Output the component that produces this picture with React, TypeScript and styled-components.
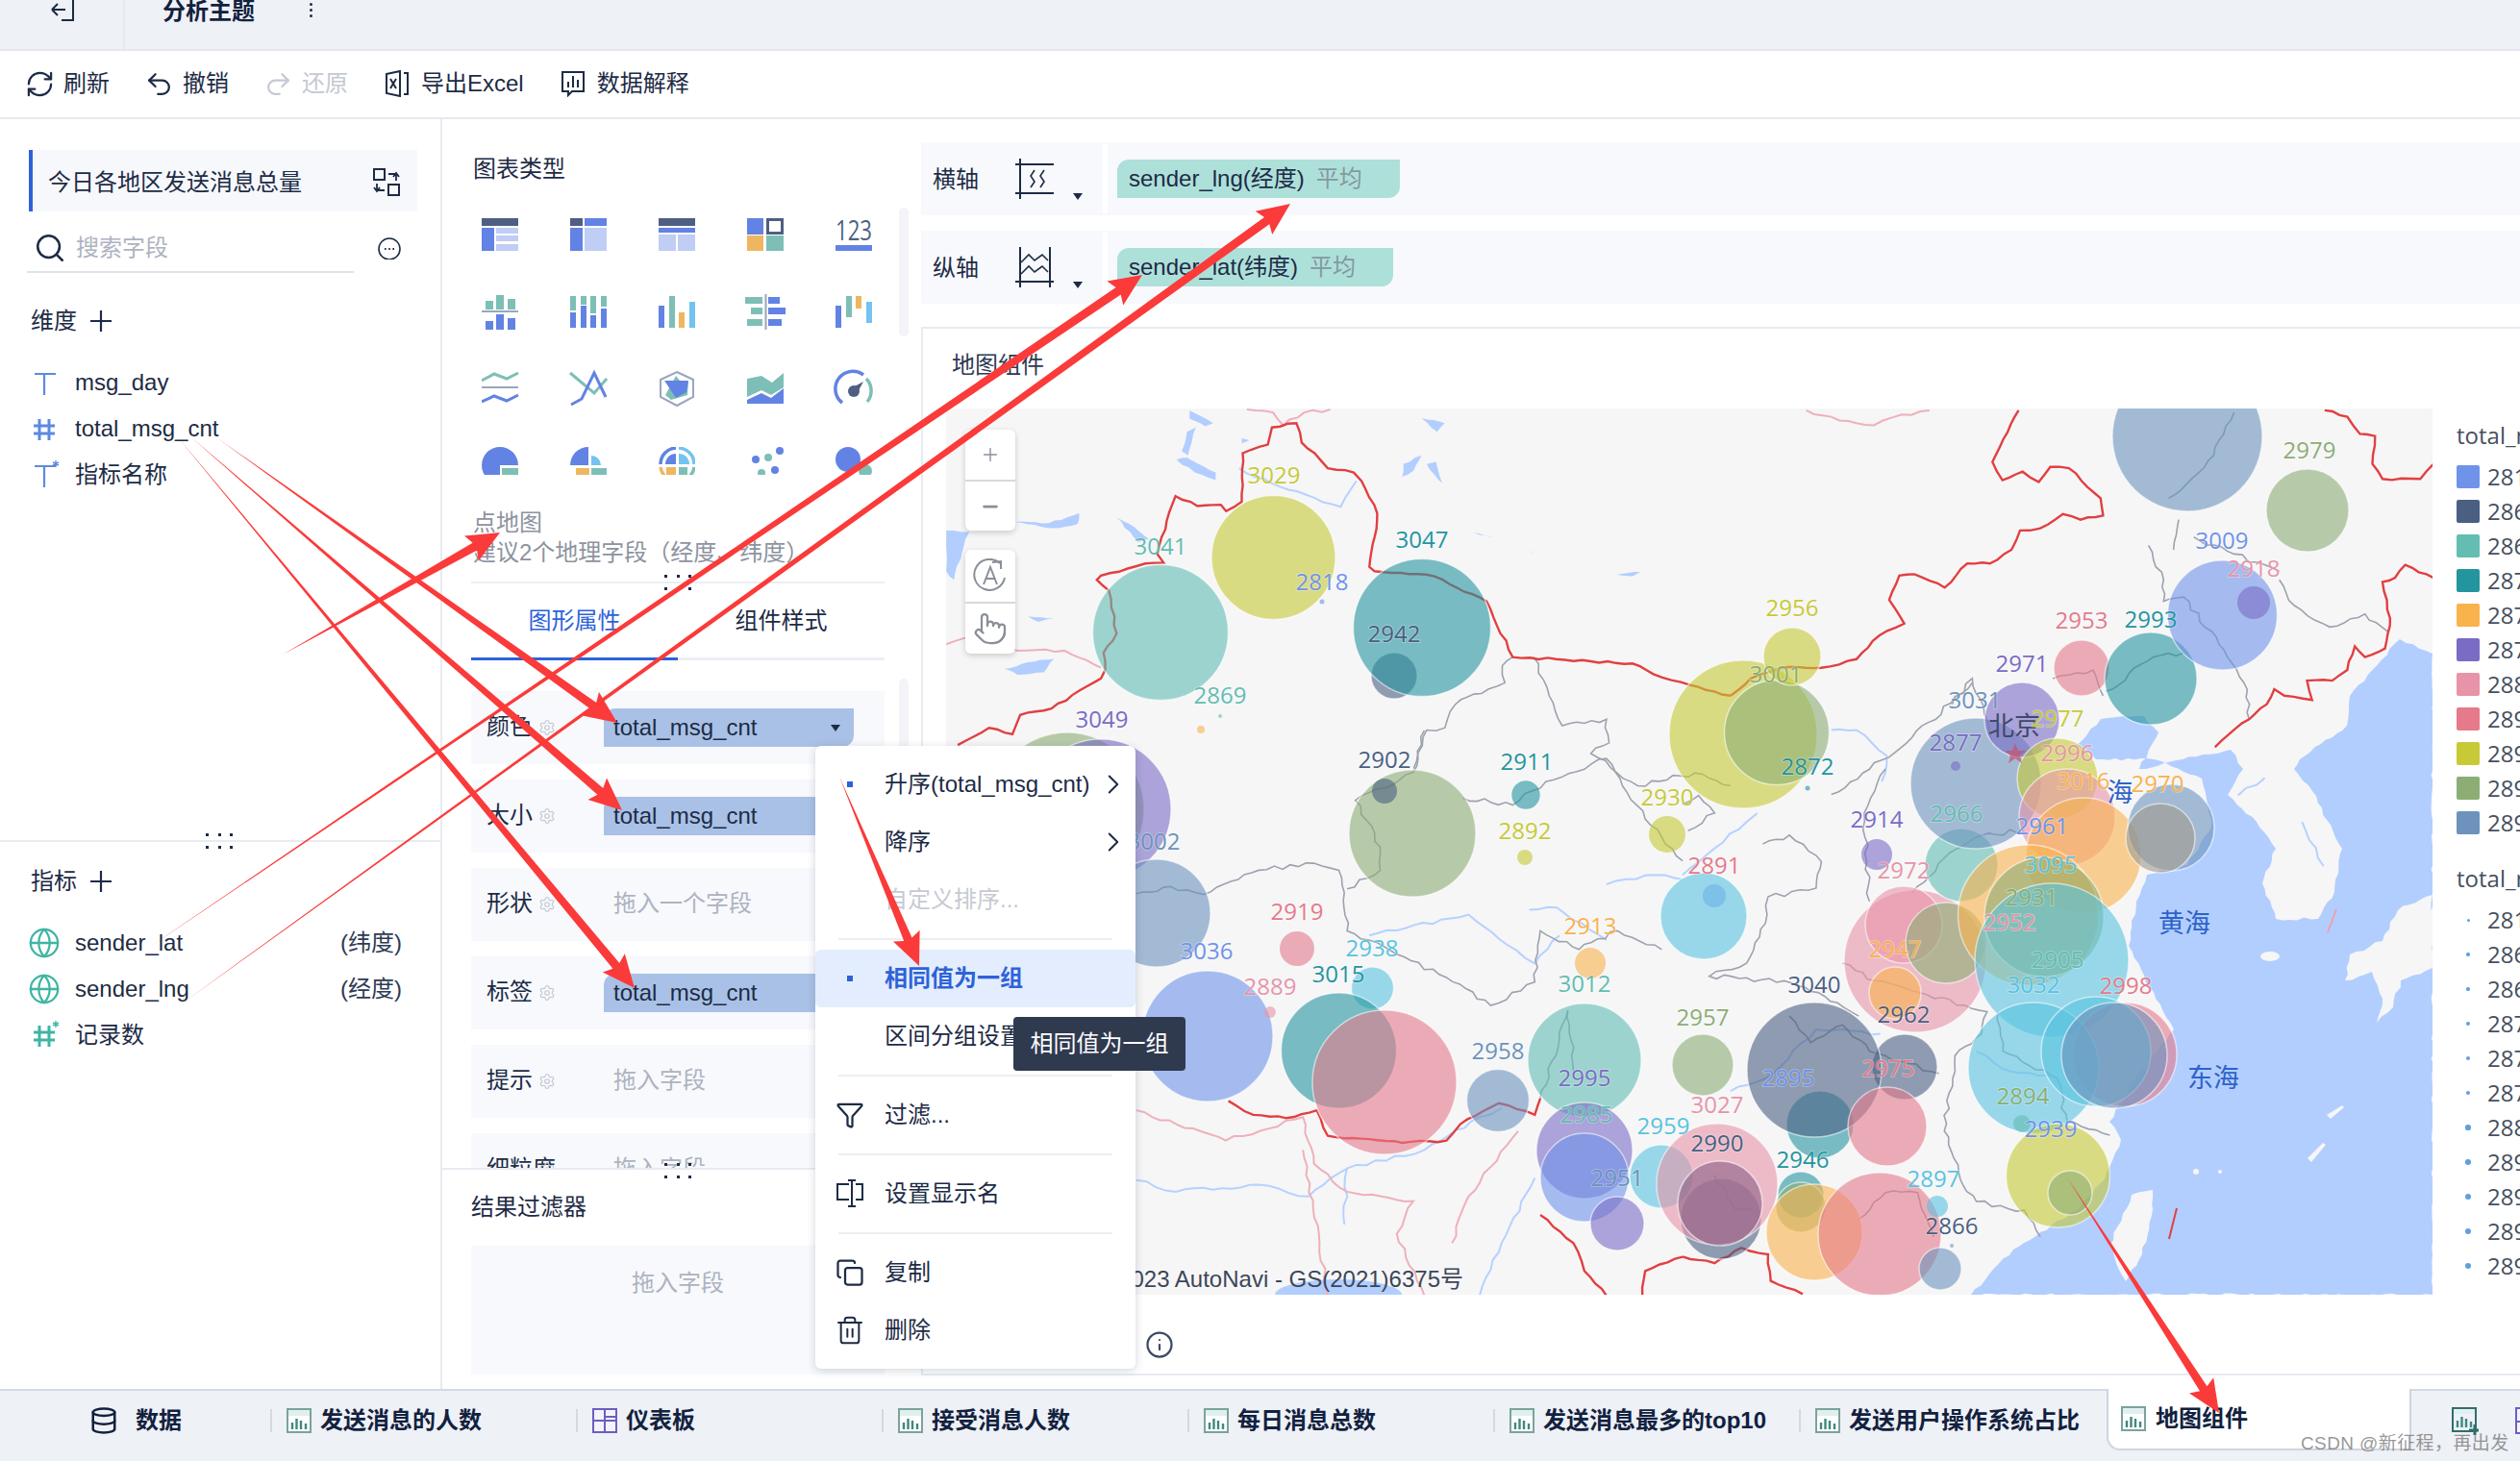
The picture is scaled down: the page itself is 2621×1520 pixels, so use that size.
import React from 'react';
import styled, { createGlobalStyle } from 'styled-components';
import { RefreshCw, Undo2, Redo2, Search, Globe, Settings, ChevronRight, Info, Filter, Copy, Trash2, Database, Pointer, Minus, Plus } from 'lucide-react';

const Global = createGlobalStyle`
  html, body { margin: 0; padding: 0; background: #fff; overflow: hidden; }
  body { font-family: "Liberation Sans", "Noto Sans CJK SC", sans-serif; font-size: 24px; line-height: 1.2; color: #1d2b45; }
  * { box-sizing: border-box; }
`;

const Page = styled.div`
  position: relative; width: 2621px; height: 1520px; overflow: hidden;
  display: flex; flex-direction: column; background: #fff;
`;
const TopBar = styled.div`
  height: 53px; background: #eef1f6; border-bottom: 2px solid #e4e7ee;
  display: flex; align-items: flex-start; flex: none;
`;
const BackCell = styled.div`
  width: 130px; height: 51px; border-right: 2px solid #e6e9f0; padding-left: 51px;
`;
const TopTitle = styled.div`
  margin-left: 39px; width: 153px; font-weight: 700; line-height: 24px; color: #12213f;
`;
const Dots = styled.div`
  margin-top: 3px; display: flex; flex-direction: column; gap: 3px;
  i { width: 3px; height: 3px; background: #1d2b45; display: block; border-radius: 50%; }
`;
const Toolbar = styled.div`
  height: 71px; border-bottom: 2px solid #e6e9ef; flex: none;
  display: flex; align-items: center; gap: 38px; padding-left: 28px;
`;
const ToolItem = styled.div<{ $off?: boolean }>`
  display: flex; align-items: center; gap: 12px; color: ${p => (p.$off ? '#c4c9d2' : '#1d2b45')};
  svg { flex: none; }
`;
const ToolLucide = styled.span`
  width: 26px; height: 26px; display: flex; align-items: center; justify-content: center; flex: none;
`;
const Main = styled.div`
  display: flex; height: 1321px; flex: none;
`;
const LeftPanel = styled.div`
  width: 460px; flex: none; border-right: 2px solid #e8ebf1; position: relative;
`;
const LeftUpper = styled.div`
  height: 752px; border-bottom: 2px solid #e8ebf1; padding-top: 32px;
`;
const TitleBox = styled.div`
  margin: 0 24px 0 30px; height: 64px; background: #f6f8fc; border-left: 4px solid #2e62d9;
  display: flex; align-items: center; justify-content: space-between; padding: 4px 18px 0 16px;
`;
const SearchRow = styled.div`
  margin: 10px 0 0 28px; display: flex; align-items: center; gap: 24px;
`;
const SearchBox = styled.div`
  width: 340px; height: 54px; border-bottom: 2px solid #dfe2ea; display: flex; align-items: center;
  gap: 10px; padding: 4px 0 0 7px; color: #aeb3c0;
`;
const FieldHead = styled.div<{ $top: number }>`
  margin: ${p => p.$top}px 0 0 32px; height: 36px; display: flex; align-items: center; gap: 14px;
`;
const FieldList = styled.div`
  margin-top: 21px; display: flex; flex-direction: column;
`;
const FieldRow = styled.div`
  height: 48px; display: flex; align-items: center; padding: 2px 40px 0 30px;
  svg { flex: none; }
`;
const GlobeIcon = styled(Globe)`
  margin: 0 -1px;
`;
const FieldName = styled.span`
  margin-left: 16px; flex: 1;
`;
const Suffix = styled.span`
  color: #2e3a52;
`;
const MiddlePanel = styled.div`
  width: 498px; flex: none; padding-left: 30px; position: relative;
  display: flex; flex-direction: column;
`;
const SectionTitle = styled.div`
  margin: 37px 0 0 2px; height: 30px; line-height: 30px; color: #1d2b45;
`;
const ChartGrid = styled.div`
  margin: 36px 0 0 11px; display: grid; grid-template-columns: repeat(5, 38px); column-gap: 54px;
  grid-auto-rows: 80px; height: 301px; overflow: hidden;
`;
const HintTitle = styled.div`
  color: #8d93a0; height: 31px; line-height: 32px; margin-left: 2px;
`;
const TabsRow = styled.div`
  margin-top: 15px; width: 430px; height: 82px; border-top: 2px solid #eceff4; border-bottom: 3px solid #eceff4;
  display: flex; position: relative;
`;
const TabCell = styled.div<{ $on?: boolean }>`
  flex: 1; display: flex; align-items: center; justify-content: center; height: 80px; margin-bottom: -3px; padding-top: 2px;
  color: ${p => (p.$on ? '#2e62d9' : '#1d2b45')};
  border-bottom: 3px solid ${p => (p.$on ? '#2e62d9' : 'transparent')};
`;
const PropList = styled.div`
  margin-top: 32px; height: 497px; overflow: hidden; display: flex; flex-direction: column; gap: 16px; width: 430px;
`;
const PropRow = styled.div`
  height: 76px; flex: none; background: #f7f9fc; display: flex; align-items: center; padding-left: 16px;
`;
const PropLabel = styled.div`
  width: 54px; flex: none; white-space: nowrap;
`;
const GearWrap = styled.div`
  width: 68px; flex: none; display: flex; color: #c3c9d4;
`;
const PropPill = styled.div`
  width: 260px; height: 40px; background: #a9c1e6; border-radius: 12px 0 12px 0; padding: 2px 14px 0 10px;
  display: flex; align-items: center; justify-content: space-between;
`;
const Caret = styled.i`
  width: 0; height: 0; border-left: 5px solid transparent; border-right: 5px solid transparent; border-top: 7px solid #1d2b45; display: block;
`;
const Placeholder = styled.span`
  color: #aeb3c0; margin-left: 10px;
`;
const FilterArea = styled.div`
  border-top: 2px solid #e8ebf1; margin-left: -30px; padding: 24px 0 0 30px; height: 230px; flex: none;
`;
const FilterTitle = styled.div`
  height: 30px; line-height: 30px;
`;
const DropZone = styled.div`
  margin-top: 25px; width: 430px; height: 134px; background: #f7f9fc; color: #aeb3c0; text-align: center; padding-top: 25px;
`;
const ScrollThumb = styled.div<{ $top: number; $h: number }>`
  position: absolute; left: 475px; top: ${p => p.$top}px; width: 10px; height: ${p => p.$h}px; background: #f3f4f8; border-radius: 5px;
`;
const Grip = styled.div<{ $x: number; $y: number }>`
  position: absolute; left: ${p => p.$x}px; top: ${p => p.$y}px; width: 28px; height: 16px; z-index: 2;
  display: grid; grid-template-columns: repeat(3, 3px); grid-template-rows: repeat(2, 3px); justify-content: space-between; align-content: space-between;
  i { background: #1d2b45; display: block; }
`;
const RightPanel = styled.div`
  flex: 1; min-width: 0; padding-top: 24px; display: flex; flex-direction: column;
`;
const AxisRow = styled.div`
  height: 76px; background: #f7f9fc; display: flex; align-items: center; margin-bottom: 16px; flex: none;
`;
const AxisName = styled.div`
  width: 98px; padding: 2px 0 0 12px; flex: none;
`;
const AxisIcon = styled.div`
  width: 65px; height: 76px; flex: none; position: relative; display: flex; align-items: center;
`;
const AxisCaret = styled(Caret)`
  position: absolute; left: 60px; top: 53px;
`;
const AxisGap = styled.div`
  width: 5px; height: 72px; background: #fff; margin-left: 26px; flex: none;
`;
const AxisPill = styled.div`
  margin-left: 10px; height: 40px; background: #aee0da; border-radius: 12px 0 12px 0; display: flex; align-items: center;
  padding: 0 39px 0 12px; gap: 12px;
`;
const AxisAgg = styled.span`
  color: #82999f;
`;
const Card = styled.div`
  margin-top: 8px; height: 1091px; border: 2px solid #e7ecf2; border-right: 0; padding-left: 24px; display: flex; flex-direction: column; flex: none;
`;
const CardTitle = styled.div`
  height: 83px; padding: 23px 0 0 6px; line-height: 30px; color: #2e3a52; flex: none;
`;
const CardBody = styled.div`
  display: flex; flex: none; height: 922px;
`;
const MapBox = styled.div`
  width: 1546px; height: 922px; position: relative; background: #f6f6f7; overflow: hidden; flex: none;
`;
const ZoomGroup = styled.div<{ $top: number }>`
  position: absolute; left: 20px; top: ${p => p.$top}px; width: 52px; background: #fff; border-radius: 6px;
  box-shadow: 0 2px 6px rgba(0,0,0,.18); display: flex; flex-direction: column;
`;
const ZoomBtn = styled.div<{ $h: number }>`
  height: ${p => p.$h}px; display: flex; align-items: center; justify-content: center; color: #8a8f99;
  & + & { border-top: 2px solid #d6d8dd; }
`;
const Legend = styled.div`
  flex: 1; padding: 13px 0 0 25px; overflow: hidden; white-space: nowrap; color: #46505f;
`;
const LegendHead = styled.div`
  height: 30px; line-height: 30px; font-family: "Open Sans", sans-serif;
`;
const LegendRow = styled.div`
  height: 36px; display: flex; align-items: center; gap: 8px; font-family: "Open Sans", sans-serif;
`;
const LegendSwatch = styled.i<{ $c: string }>`
  width: 24px; height: 24px; border-radius: 2px; background: ${p => p.$c}; display: block; flex: none;
`;
const LegendDotCell = styled.span`
  width: 24px; display: flex; justify-content: center; flex: none;
`;
const LegendDot = styled.i<{ $s: number }>`
  width: ${p => p.$s}px; height: ${p => p.$s}px; border-radius: 50%; background: #62a0dc; display: block;
`;
const LegendGap = styled.div<{ $h: number }>`
  height: ${p => p.$h}px;
`;
const CardFoot = styled.div`
  padding: 37px 0 0 207px; color: #3c4a66;
`;
const BottomBar = styled.div`
  height: 76px; flex: none; background: #eef1f6; border-top: 2px solid #d4d8e2; display: flex; align-items: flex-start;
  font-weight: 700; color: #12213f;
`;
const DataTab = styled.div`
  width: 281px; height: 62px; flex: none; padding-left: 93px; display: flex; align-items: center; gap: 18px;
`;
const BarTab = styled.div`
  width: 318px; height: 62px; flex: none; display: flex; align-items: center; gap: 9px; padding-left: 17px; position: relative;
  &::before { content: ''; position: absolute; left: 0; top: 19px; height: 24px; width: 2px; background: #d5d9e2; }
`;
const ActiveTab = styled.div`
  width: 317px; height: 64px; flex: none; margin: -2px 0 0 2px; background: #fff; border: 2px solid #d0d5e0; border-top: 0;
  border-radius: 0 0 0 14px; display: flex; align-items: center; gap: 10px; padding-left: 13px;
`;
const TailTab = styled.div`
  flex: 1; height: 74px; display: flex; gap: 38px; padding: 17px 0 0 42px; overflow: hidden;
`;
const Watermark = styled.div`
  position: absolute; left: 2393px; top: 1488px; font-size: 19px; letter-spacing: .4px; line-height: 28px; color: rgba(110,110,110,.72); font-weight: 400; z-index: 6; white-space: nowrap;
`;
const Menu = styled.div`
  position: absolute; left: 848px; top: 776px; width: 333px; height: 648px; background: #fff; border-radius: 6px;
  box-shadow: 0 2px 10px rgba(60,70,90,.22); padding: 10px 0; z-index: 4;
`;
const MenuItem = styled.div<{ $active?: boolean; $off?: boolean }>`
  height: 60px; display: flex; align-items: center; padding: 0 6px 0 24px; border-radius: 6px;
  background: ${p => (p.$active ? '#e3edfd' : 'transparent')};
  color: ${p => (p.$active ? '#2e62d9' : p.$off ? '#c6cad2' : '#1d2b45')};
  font-weight: ${p => (p.$active ? 700 : 400)};
`;
const MenuIcon = styled.span`
  width: 24px; height: 24px; margin-right: 24px; flex: none; display: flex; align-items: center; justify-content: center;
  svg { flex: none; }
`;
const MenuText = styled.span`
  flex: 1; white-space: nowrap;
`;
const BlueDot = styled.i`
  width: 6px; height: 6px; background: #2e62d9; display: block;
`;
const MenuLine = styled.div`
  height: 2px; margin: 10px 24px; background: #eceef3;
`;
const Tip = styled.div`
  position: absolute; left: 1054px; top: 1058px; width: 179px; height: 56px; background: #2f3a4f; color: #fff;
  border-radius: 4px; display: flex; align-items: center; justify-content: center; z-index: 5;
`;
const Overlay = styled.svg`
  position: absolute; left: 0; top: 0; z-index: 7; pointer-events: none;
`;

/* ---------- colours ---------- */
const BL = '#6283e3', DK = '#4f5f82', LT = '#c0cdf4', TE = '#7dbfb6', OR = '#efb660', SK = '#72c3ef', GR = '#9aa6bc';

/* ---------- chart type icons ---------- */
const R = (x: number, y: number, w: number, h: number, f: string) => <rect x={x} y={y} width={w} height={h} fill={f} />;
const P = (pts: string, c: string, w = 3) => <polyline points={pts} fill="none" stroke={c} strokeWidth={w} />;
const chartIcons: React.ReactNode[] = [
  <>{R(0,0,38,8,DK)}{R(0,10,13,24,BL)}{R(15,10,23,6,LT)}{R(15,18,23,6,LT)}{R(15,27,23,7,LT)}</>,
  <>{R(0,0,13,8,DK)}{R(15,0,23,8,BL)}{R(0,10,13,24,BL)}{R(15,10,23,24,LT)}</>,
  <>{R(0,0,38,8,DK)}{R(0,10,38,5,BL)}{R(0,17,18,17,LT)}{R(20,17,18,17,LT)}</>,
  <>{R(0,0,17,17,BL)}<rect x="21.5" y="1.5" width="15" height="14" fill="none" stroke={DK} strokeWidth="3" />{R(0,18,17,16,OR)}{R(20,18,18,16,TE)}</>,
  <><text x="19" y="23" textAnchor="middle" fontSize="30" fill={DK} fontFamily="Open Sans, sans-serif" textLength="38" lengthAdjust="spacingAndGlyphs">123</text>{R(0,28,38,6,BL)}</>,
  <>{R(4,6,8,9,TE)}{R(15,0,8,15,TE)}{R(27,4,8,11,TE)}{R(0,16,38,2,GR)}{R(4,27,8,9,BL)}{R(15,20,8,16,BL)}{R(27,24,8,12,BL)}</>,
  <>{R(0,1,6,15,TE)}{R(11,1,6,9,TE)}{R(21,1,6,18,TE)}{R(32,1,6,11,TE)}{R(0,18,6,16,BL)}{R(11,11,6,23,BL)}{R(21,21,6,13,BL)}{R(32,14,6,20,BL)}</>,
  <>{R(0,11,6,23,BL)}{R(11,1,6,33,TE)}{R(21,18,6,16,OR)}{R(32,7,6,27,SK)}</>,
  <>{R(-2,2,18,7,TE)}{R(4,13,12,7,TE)}{R(0,25,16,7,TE)}{R(18.5,-1,2,37,GR)}{R(22,2,12,7,BL)}{R(22,13,18,7,BL)}{R(22,25,14,7,BL)}</>,
  <>{R(0,11,6,23,BL)}{R(11,1,6,22,TE)}{R(21,1,6,13,OR)}{R(32,7,6,22,SK)}</>,
  <>{P('0,9 13,2 26,7 38,1',TE)}{R(0,15,38,2,GR)}{P('0,31 13,25 26,30 38,24',BL)}</>,
  <>{P('0,1 25,22 38,7',TE)}{P('1,34 12,28 25,1 37,26',BL)}</>,
  <><polygon points="19,0 36,8 36,26 19,35 2,26 2,8" fill="none" stroke={GR} strokeWidth="2" /><polygon points="18,4 23,10 31,10 30,24 13,29 7,24" fill={TE} /><polygon points="6,9 31,9 29,21 18,27" fill={BL} /></>,
  <><polygon points="0,7 15,4 26,11 38,1 38,16 25,24 15,19 0,26" fill={TE} /><polygon points="0,29 15,22 25,27 38,17 38,33 0,33" fill={BL} /></>,
  <><path d="M7 32A18 18 0 0 1 29 3" fill="none" stroke={BL} strokeWidth="3.5" /><path d="M32 7A18 18 0 0 1 33 31" fill="none" stroke={TE} strokeWidth="3.5" /><circle cx="19" cy="20" r="6" fill={DK} /><polygon points="29,10 22,23 16,17" fill={DK} /></>,
  <><circle cx="19" cy="19" r="19" fill={BL} />{R(19,19,20,12,'#fff')}{R(21,22,17,8,TE)}</>,
  <><path d="M19 0A19 19 0 0 0 0 19H19Z" fill={BL} /><path d="M22 19V9A10 10 0 0 1 32 19Z" fill={SK} />{R(6,22,14,8,OR)}{R(22,22,16,8,TE)}</>,
  <><path d="M2 18A17 17 0 0 1 18 1" fill="none" stroke={BL} strokeWidth="3.5" /><path d="M21 1A17 17 0 0 1 37 18" fill="none" stroke={SK} strokeWidth="3.5" /><path d="M2 21A17 17 0 0 0 6 30" fill="none" stroke={OR} strokeWidth="3.5" /><path d="M37 21A17 17 0 0 1 33 30" fill="none" stroke={TE} strokeWidth="3.5" /><path d="M18 7A11 11 0 0 0 7 18H18Z" fill={BL} /><path d="M21 7A11 11 0 0 1 32 18H21Z" fill={SK} />{R(8,21,10,9,OR)}{R(21,21,9,9,TE)}</>,
  <><circle cx="9" cy="13" r="4" fill={BL} /><circle cx="22" cy="11" r="4" fill={TE} /><circle cx="34" cy="4" r="4" fill={BL} /><circle cx="15" cy="27" r="4" fill={TE} /><circle cx="29" cy="24" r="4" fill={BL} /></>,
  <><circle cx="13" cy="13" r="13" fill={BL} /><circle cx="31" cy="25" r="7" fill={TE} /></>,
];
const ChartSvg = styled.svg<{ $last: boolean }>`
  display: block; overflow: ${p => (p.$last ? 'hidden' : 'visible')};
  margin-top: ${p => (p.$last ? '-2px' : '0')};
`;

/* ---------- map helpers ---------- */
type Pt = [number, number];
const conv = (ox: number, oy: number, sx: number, sy: number) => (pts: number[][]): Pt[] => pts.map(([x, y]) => [ox + x / sx, oy + y / sy]);
const Z3 = conv(950, 130, 1.845, 2.24);
const Z4 = conv(1800, 130, 1.91, 2.24);
const Z5 = conv(850, 760, 1.742, 2.063);
const Z6 = conv(1750, 800, 1.8, 2.178);
let seed = 12345;
const rnd = () => { seed = (seed * 16807) % 2147483647; return seed / 2147483647 - 0.5; };
const jag = (pts: Pt[], amp = 2.4, step = 9, close = false) => {
  let d = '';
  const list = close ? [...pts, pts[0]] : pts;
  list.forEach((p, i) => {
    if (i === 0) { d += `M${p[0].toFixed(1)} ${p[1].toFixed(1)}`; return; }
    const q = list[i - 1];
    const dx = p[0] - q[0], dy = p[1] - q[1];
    const len = Math.hypot(dx, dy);
    const n = Math.max(1, Math.round(len / step));
    for (let k = 1; k <= n; k++) {
      const t = k / n;
      const off = k === n ? 0 : rnd() * amp * 2;
      d += `L${(q[0] + dx * t - (dy / len) * off).toFixed(1)} ${(q[1] + dy * t + (dx / len) * off).toFixed(1)}`;
    }
  });
  return d + (close ? 'Z' : '');
};
const C = { B: '#7093ea', D: '#4a5f82', T: '#63bdb2', C: '#24959f', O: '#fab24c', P: '#7a6cc4', K: '#e794a8', R: '#e57a8a', Y: '#c7ca36', G: '#8cae74', S: '#6d93bc', A: '#59c3e0' };
const redLines: Pt[][] = [
  Z3([[85,1445],[145,1405],[190,1420],[205,1375],[265,1360],[360,1290],[368,1270],[365,1230],[390,1185],[375,1085],[352,1060],[360,1050],[445,1022],[480,1020],[468,1000],[503,865],[545,888],[590,885],[600,900],[630,878],[632,765],[680,745],[688,705],[735,695],[745,740],[770,765],[795,800],[845,810],[860,830],[890,905],[885,960],[875,1030],[885,1040],[1000,1052],[1100,1110],[1150,1240],[1300,1250],[1380,1255],[1420,1280],[1490,1305],[1568,1330]]),
  Z4([[0,1330],[40,1290],[100,1265],[180,1265],[250,1245],[295,1190],[345,1162],[315,1107],[335,1050],[365,1047],[425,1078],[470,1022],[515,1022],[558,990],[575,945],[615,940],[660,907],[695,920],[740,910],[735,870],[672,800],[635,797],[612,832],[580,808],[540,828],[520,785],[535,750],[572,665]]),
  Z4([[1180,665],[1225,680],[1250,720],[1280,725],[1275,790],[1295,825],[1370,825],[1396,790]]),
  Z4([[1396,1055],[1340,1025],[1320,1055],[1295,1065],[1310,1150],[1300,1220],[1260,1240],[1240,1215],[1225,1270],[1195,1295],[1145,1295],[1155,1340],[1100,1330],[1080,1315],[1065,1350],[1030,1385],[990,1420],[962,1450]]),
  Z5([[745,795],[790,825],[850,832],[905,815],[925,870],[1060,885],[1140,880],[1165,845],[1235,800],[1300,825],[1310,790]]),
  Z5([[1310,1040],[1370,1100],[1390,1160],[1430,1213]]),
  Z5([[1495,1213],[1500,1160],[1568,1130]]),
  Z6([[0,1105],[60,1120],[110,1085],[160,1100],[165,1160],[225,1190]]),
];
const pinkLines: Pt[][] = [
  Z4([[150,665],[200,680],[250,695],[285,700],[340,675],[395,665]]),
  Z3([[640,663],[690,670],[710,700],[750,670],[800,663]]),
  Z3([[63,1210],[100,1195],[200,1225],[290,1225],[360,1265]]),
  Z5([[578,815],[740,880],[880,830],[900,930],[960,990],[1080,1010],[1050,1080],[1100,1213]]),
  Z5([[880,900],[910,1100],[925,1213]]),
  Z5([[1270,860],[1180,1000],[1150,1100]]),
];
const greyLines: Pt[][] = [
  Z3([[1150,1240],[1130,1260],[1135,1300],[1090,1325],[1040,1350],[1020,1405],[985,1410],[960,1500]]),
  Z3([[1190,1240],[1220,1330],[1245,1400],[1330,1385],[1335,1440],[1300,1465],[1390,1540],[1500,1510],[1568,1540]]),
  Z5([[578,350],[640,335],[700,352],[800,300],[900,285],[945,300],[960,430],[1140,530],[1220,590],[1300,540],[1310,430],[1380,470],[1450,430],[1530,470]]),
  Z5([[1100,0],[1080,90],[975,150],[1020,250],[1020,300],[960,340]]),
  Z5([[1170,145],[1260,160],[1320,110],[1430,60],[1500,190],[1568,280]]),
  Z5([[1310,790],[1360,600],[1370,730]]),
  Z6([[0,80],[30,60],[60,100],[10,140]]),
  Z6([[150,170],[200,150],[260,210],[250,270],[160,290],[155,350],[120,440],[50,470],[190,480],[290,530],[330,560]]),
  Z6([[350,300],[340,100],[380,0]]),
  Z6([[430,280],[500,190],[560,150],[640,140]]),
  Z6([[300,440],[360,480],[570,550],[560,600],[510,650],[490,820],[520,930],[550,980],[640,1000],[670,1060]]),
  Z6([[200,560],[240,620],[300,580],[350,640],[480,690]]),
  Z6([[60,920],[100,1000],[130,1000]]),
  Z6([[330,1020],[380,960],[440,960],[470,1060]]),
  Z6([[590,550],[600,640],[700,700],[720,800],[800,830]]),
  Z4([[830,980],[860,1060],[860,1110],[900,1100],[970,1210],[1020,1300],[1030,1385]]),
  Z4([[880,990],[890,920]]),
  Z4([[1090,1060],[1120,1120],[1190,1170],[1260,1140],[1305,1180]]),
  Z4([[920,960],[1000,1000],[1090,1040]]),
  Z4([[745,1320],[840,1240],[900,1230]]),
  Z4([[640,1290],[720,1270],[740,1330]]),
  Z4([[520,1440],[480,1290],[440,1350]]),
  Z4([[200,1560],[300,1480],[350,1440],[480,1300]]),
  Z4([[870,870],[960,770],[1000,670]]),
];
const rivers: Pt[][] = [
  Z5([[578,965],[650,990],[800,975],[890,1000],[960,940],[1100,900],[1200,830],[1240,810]]),
  Z5([[960,940],[955,1060]]),
  Z5([[1000,440],[1180,395],[1250,460],[1300,500],[1345,440]]),
  Z5([[1290,385],[1340,380],[1430,450]]),
  Z5([[1430,330],[1520,310],[1568,320]]),
  Z5([[1200,1213],[1240,1100],[1300,960]]),
  Z3([[625,800],[720,850],[820,890],[850,830]]),
  Z4([[200,1410],[250,1410],[310,1470],[300,1530]]),
  Z6([[0,240],[60,180],[120,120],[140,100]]),
  Z6([[370,600],[250,590],[170,690],[90,730]]),
  Z6([[550,640],[600,680],[700,700]]),
  Z6([[1040,60],[1090,20]]),
  Z6([[1160,120],[1200,220]]),
];
const lakes: Pt[][] = [
  [[530,665],[575,695],[560,702],[530,685]],
  [[525,715],[542,705],[527,770],[515,760]],
  [[505,780],[525,775],[580,810],[580,828],[540,810]],
  [[195,925],[260,928],[318,905],[315,930],[270,940]],
  [[63,945],[108,948],[100,965],[78,1060],[63,1040]],
  [[390,915],[415,930],[452,965],[432,972]],
  [[175,1268],[220,1252],[270,1244],[250,1276],[200,1281]],
  [[220,1145],[270,1150],[240,1158]],
  [[975,683],[1020,695],[1005,715]],
  [[940,790],[975,770],[960,805],[938,820]],
  [[985,790],[1003,785],[1015,835],[1000,815]],
  [[630,730],[645,735],[630,742]],
  [[1075,950],[1115,960],[1085,955]],
  [[1175,985],[1195,1000],[1185,995]],
  [[1350,1048],[1395,1042],[1380,1052]],
].map(l => Z3(l));
const sea: Pt[] = [[2050,1347],[2094,1300],[2122,1282],[2161,1259],[2189,1227],[2206,1186],[2194,1167],[2222,1121],[2261,1071],[2242,1039],[2214,984],[2222,938],[2233,910],[2275,900],[2300,860],[2290,810],[2240,790],[2180,790],[2160,775],[2185,748],[2230,745],[2245,762],[2225,800],[2270,790],[2320,780],[2333,800],[2317,827],[2347,855],[2367,883],[2353,919],[2367,956],[2411,956],[2428,928],[2436,883],[2405,823],[2386,800],[2392,790],[2441,755],[2444,724],[2496,665],[2530,680],[2530,1347]];
const japan: Pt[] = [[2530,931],[2494,947],[2478,979],[2444,993],[2439,1020],[2467,1011],[2478,1039],[2472,1064],[2489,1048],[2497,1020],[2530,1007]];
const taiwan: Pt[] = [[2239,1238],[2217,1243],[2194,1296],[2211,1333],[2228,1305],[2239,1259]];

const bubbles: [number, number, number, string][] = [
  [1110,842,80,C.G],[1145,842,73,C.P],[1203,950,56,C.S],[1256,1078,68,C.B],[1321,1053,6,C.K],
  [1324.5,580,64.5,C.Y],[1207,658,70.5,C.T],[1375,626,2.5,C.B],[1269,745,2,C.T],[1249,759,4,C.O],
  [1450,703,24,C.D],[1479,653,71.5,C.C],
  [1469,867,66,C.G],[1440,823,13,C.D],[1587,827,14.7,C.C],[1586,892,8,C.Y],[1734,868,19,C.Y],[1654,1002,16,C.O],
  [1349,987,18,C.R],[1427.5,1028,22,C.A],[1392.5,1093,60,C.C],[1440,1126,75,C.R],[1558,1145,32.5,C.S],
  [1648,1103,59,C.T],[1648,1197,50,C.P],[1648,1225,46,C.B],[1682,1273,28,C.P],[1728,1224,33,C.A],[1771,1108,32,C.G],
  [1790,1268,42,C.D],[1786,1232,63,C.K],[1789,1252,44,'#8a5f86'],
  [1813,764,77,C.Y],[1848,762,54.5,C.G],[1864,683,30,C.Y],[1880,820,2.5,C.C],
  [1873,1243,24,C.C],[1873,1256,26,C.G],[1887,1282,50,C.O],[1955,1284,64,C.R],[2015,1255,11,C.A],[2030,1296,2,C.S],[2018,1320,22,C.S],
  [1981,1110,34,C.D],[1893,1170,35,C.C],[1887,1113,70,C.D],[1963,1172,41,C.R],
  [1992,1000,74,C.K],[1980,962,40,C.K],[2024,981,42,C.G],[1971,1033,27,C.O],
  [1952,889,16,C.P],[1772,953,45,C.A],[1783,932,12,'#6db0e8'],
  [2040,900,38,C.T],[2055,815,68,C.S],[2034,797,5,C.P],
  [2103,749,39,C.P],[2165,695,29,C.R],[2237,706,48,C.C],[2311.5,640,57,C.B],[2344,627,17,C.P],
  [2275,454,78,C.S],[2400,531,43,C.G],
  [2140,810,42,C.Y],
  [2150,850,50,C.K],[2167,890,60,C.O],[2258,861,45,C.S],[2247,872,36,'#a09a8c'],
  [2109.5,952,73,C.O],[2126,954,62,C.G],[2134,999,80,C.A],[2210,1097,54,C.R],[2115,1111,68,C.A],[2180,1094,57,C.A],[2199,1098,55,C.S],
  [2103,1169,9,C.T],[2140.5,1223,54,C.Y],[2153,1241,23,C.G],
];
const labels: [string, number, number, string][] = [
  ['3029',1325,493,C.Y],['3041',1207,567,C.T],['2818',1375,604,C.B],['3047',1479,560,C.C],['2942',1450,658,C.D],['2869',1269,722,C.T],['3049',1146,747,C.P],
  ['3002',1200,874,C.S],['3036',1255,988,C.B],['2919',1349,947,C.R],['2889',1321,1025,C.K],['2938',1427,985,C.A],['3015',1392,1012,C.C],['2958',1558,1092,C.S],
  ['2902',1440,789,C.D],['2911',1588,791,C.C],['2892',1586,863,C.Y],['2930',1734,828,C.Y],['2913',1654,962,C.O],['3012',1648,1022,C.T],['2995',1648,1120,C.P],['2985',1650,1158,C.T],
  ['2951',1682,1224,C.S],['2959',1730,1170,C.A],['2957',1771,1057,C.G],['2990',1786,1188,C.D],['3027',1786,1148,C.K],['2946',1875,1205,C.C],['2897',2011,1225,C.A],['2866',2030,1274,C.D],
  ['3040',1887,1023,C.D],['2895',1860,1120,C.B],['2975',1964,1110,C.R],['2962',1980,1054,C.D],['2947',1971,986,C.O],['2972',1980,904,C.K],['2914',1952,851,C.P],['2891',1783,899,C.R],['2966',2035,845,C.T],
  ['2877',2034,771,C.P],['3031',2054,727,C.S],['2971',2103,689,C.P],['2977',2140,746,C.Y],['2953',2165,644,C.R],['2993',2237,643,C.C],['3009',2311,561,C.B],['2918',2344,590,C.K],['2979',2402,467,C.G],
  ['2956',1864,631,C.Y],['3001',1847,700,C.G],['2872',1880,796,C.C],['2996',2150,782,C.K],['3016',2167,811,C.O],['2970',2244,814,C.O],['2961',2124,858,C.B],['3095',2133,898,C.A],['2931',2113,932,C.G],['2952',2090,958,C.K],
  ['2905',2140,997,C.T],['3032',2115,1023,C.A],['2998',2211,1024,C.R],['2894',2104,1139,C.G],['2939',2133,1173,C.B],
];
const places: [string, number, number, string][] = [
  ['北京',2095,753,'#3e4a68'],['海',2205,822,'#2e62c8'],['黄海',2272,958,'#2e62c8'],['东海',2302,1119,'#2e62c8'],
];

const paths = {
  rivers: rivers.map(l => jag(l, 2, 10)),
  lakes: lakes.map(l => jag(l, 1, 7, true)),
  red: redLines.map(l => jag(l, 1.2, 9)),
  pink: pinkLines.map(l => jag(l, 2, 9)),
  grey: greyLines.map(l => jag(l, 2.6, 8)),
  sea: jag(sea, 1.5, 7, true),
  japan: jag(japan, 2, 7, true),
  taiwan: jag(taiwan, 1.5, 7, true),
};

const MapSvg = styled.svg`
  display: block; font-family: "Open Sans", sans-serif;
  text { dominant-baseline: central; text-anchor: middle; }
`;
const CopyText = styled.text`
  &&& { text-anchor: end; }
  font-family: "Liberation Sans", "Noto Sans CJK SC", sans-serif;
  font-size: 24px; fill: #3c4658;
`;
const BubbleLabel = styled.text`
  font-size: 24px; paint-order: stroke; stroke: rgba(255,255,255,.28); stroke-width: 2px;
`;
const PlaceLabel = styled.text`
  font-family: "Noto Sans CJK SC", sans-serif; font-size: 27px;
`;

const ChinaMap = () => (
  <MapSvg width={1546} height={922} viewBox="984 425 1546 922">
    <path d={paths.sea} fill="#b2ceff" />
    <ellipse cx="1392" cy="1347" rx="66" ry="16" fill="#b2ceff" />
    <path d={paths.japan} fill="#f6f6f7" />
    <path d={paths.taiwan} fill="#f6f6f7" />
    <ellipse cx="2361" cy="995" rx="10" ry="5" fill="#f6f6f7" />
    <circle cx="2284" cy="1219" r="3" fill="#f6f6f7" /><circle cx="2309" cy="1219" r="2" fill="#f6f6f7" />
    <path d="M2400 1205l16-16 3 2-15 18ZM2420 1160l16-10 2 2-14 12Z" fill="#f6f6f7" />
    {paths.lakes.map((d, i) => <path key={i} d={d} fill="#b2ceff" />)}
    {paths.rivers.map((d, i) => <path key={i} d={d} fill="none" stroke="#b7d1ff" strokeWidth="2" />)}
    {paths.pink.map((d, i) => <path key={i} d={d} fill="none" stroke="#efb0ba" strokeWidth="2" />)}
    {paths.grey.map((d, i) => <path key={i} d={d} fill="none" stroke="#9da2ad" strokeWidth="1.6" />)}
    {paths.red.map((d, i) => <path key={i} d={d} fill="none" stroke="#e23f40" strokeWidth="2.4" />)}
    <path d="M2264 1257L2256 1289" stroke="#e23f40" strokeWidth="2" />
    <path d="M2430 946L2421 970" stroke="#efa0a8" strokeWidth="2" />
    {bubbles.map(([x, y, r, c], i) => (
      <circle key={i} cx={x} cy={y} r={r} fill={c} fillOpacity={0.6} stroke="#fff" strokeOpacity={0.55} strokeWidth={r > 20 ? 1.5 : 0} />
    ))}
    <polygon points="2096,773 2099,781 2107,781 2101,786 2103,794 2096,789 2089,794 2091,786 2085,781 2093,781" fill="#c8506e" fillOpacity=".7" />
    {places.map(([t, x, y, c]) => <PlaceLabel key={t} x={x} y={y} fill={c}>{t}</PlaceLabel>)}
    {labels.map(([t, x, y, c], i) => <BubbleLabel key={i} x={x} y={y} fill={c}>{t}</BubbleLabel>)}
    <CopyText x="1522" y="1330">© 2023 AutoNavi - GS(2021)6375号</CopyText>
  </MapSvg>
);

/* ---------- small glyph icons ---------- */
const Stroke = styled.svg<{ $c?: string }>`
  fill: none; stroke: ${p => p.$c || 'currentColor'}; stroke-width: 2; display: block; flex: none;
`;
const Glyph = styled.svg`
  display: block; flex: none;
`;
const BackIcon = () => (
  <Stroke width="26" height="24" viewBox="0 0 26 24"><path d="M10 -2H25V21H13M17 10H3M3 10l6-6M3 10l6 6" /></Stroke>
);
const SwapIcon = () => (
  <Stroke width="28" height="30" viewBox="0 0 28 30" $c="#1d2b45"><rect x="1" y="1" width="11" height="11" /><rect x="16" y="17" width="11" height="11" /><path d="M16 6h8V13M21 9l3-4 3 4M12 23H4V16M1 20l3 4 3-4" strokeWidth="1.8" /></Stroke>
);
const MoreIcon = () => (
  <Stroke width="26" height="26" viewBox="0 0 26 26" $c="#1d2b45"><circle cx="13" cy="15" r="11" strokeWidth="1.6" /><path d="M8 15h1.6M12.2 15h1.6M16.4 15h1.6" /></Stroke>
);
const PlusIcon = () => (
  <Stroke width="22" height="22" viewBox="0 0 22 22" $c="#1d2b45"><path d="M11 0V22M0 11H22" strokeWidth="2.2" /></Stroke>
);
const TIcon = ({ star, c }: { star?: boolean; c: string }) => (
  <Stroke width="32" height="32" viewBox="0 0 32 32" $c={c}>
    <path d="M6 7H28M16 7V29" strokeWidth="2.2" />{star && <path d="M28 1v7M25 3l6 3M31 3l-6 3" strokeWidth="1.4" />}
  </Stroke>
);
const HashIcon = ({ star, c }: { star?: boolean; c: string }) => (
  <Stroke width="32" height="32" viewBox="0 0 32 32" $c={c}>
    <path d="M11 6V28M21 6V28M5 13H27M5 21H27" strokeWidth="3" />{star && <path d="M28 1v7M25 3l6 3M31 3l-6 3" strokeWidth="1.4" />}
  </Stroke>
);
const ExcelIcon = () => (
  <Stroke width="26" height="28" viewBox="0 0 26 28" $c="#1d2b45">
    <path d="M2 4L16 1V27L2 24Z" /><path d="M20 3H24V25H20M6 9L12 19M12 9L6 19" />
  </Stroke>
);
const ExplainIcon = () => (
  <Stroke width="26" height="28" viewBox="0 0 26 28" $c="#1d2b45">
    <path d="M2 2H24V22H12L8 26V22H2Z" /><path d="M8 12V18M13 6V18M18 10V18" />
  </Stroke>
);
const AxisXIcon = () => (
  <Stroke width="40" height="42" viewBox="0 0 40 42" $c="#1d2b45">
    <path d="M5 0V42M0 6H40M0 36H40" /><path d="M20 12l-4 6 4 6-4 6M30 12l-4 6 4 6-4 6" strokeWidth="1.6" />
  </Stroke>
);
const AxisYIcon = () => (
  <Stroke width="40" height="42" viewBox="0 0 40 42" $c="#1d2b45">
    <path d="M5 0V42M36 0V42M0 36H40" /><path d="M6 16l8-8 6 6 8-6 6 6M6 28l8-8 6 6 8-6 6 6" strokeWidth="1.6" />
  </Stroke>
);
const AutoIcon = () => (
  <Stroke width="36" height="36" viewBox="0 0 36 36" $c="#8a8f99">
    <path d="M28 5A16 16 0 1 0 33 20" /><path d="M20 4L29 3 29 11" /><path d="M11 27L18 9 25 27M13 21H23" />
  </Stroke>
);
const RenameIcon = () => (
  <Stroke width="28" height="30" viewBox="0 0 28 30" $c="#1d2b45"><path d="M13 5H1V21H13M20 5H27V21H20M12 1H20M12 28H20M16 1V28" /></Stroke>
);
const TabBarIcon = () => (
  <Glyph width="26" height="26" viewBox="0 0 26 26">
    <rect x="1" y="1" width="24" height="24" fill="#fff" stroke="#7ba29e" strokeWidth="2" />
    <rect x="2" y="2" width="22" height="6" fill="#dff0ee" />
    <path d="M6 22V15M10.5 22V11M15 22V13M20 22V16" stroke="#3f8880" strokeWidth="2.4" />
  </Glyph>
);
const TabDashIcon = () => (
  <Glyph width="26" height="26" viewBox="0 0 26 26">
    <rect x="1" y="1" width="24" height="24" fill="#f4f3fb" stroke="#6a5fc0" strokeWidth="2" />
    <path d="M1 13H25M13 1V25M13 9H25" stroke="#6a5fc0" strokeWidth="2" />
  </Glyph>
);
const AddIcon = () => (
  <Glyph width="28" height="30" viewBox="0 0 28 30">
    <rect x="1" y="1" width="24" height="24" fill="none" stroke="#2f6f6a" strokeWidth="2" />
    <rect x="2" y="2" width="22" height="5" fill="#dff0ee" />
    <path d="M6 21V14M10.5 21V10M15 21V12M20 21V15" stroke="#3f8880" strokeWidth="2.4" />
    <path d="M24 18V29M18 24H29" stroke="#2f6f6a" strokeWidth="3" />
  </Glyph>
);
const AddDashIcon = () => (
  <Glyph width="28" height="30" viewBox="0 0 28 30">
    <rect x="1" y="1" width="26" height="26" fill="#f4f3fb" stroke="#6a5fc0" strokeWidth="2" />
    <path d="M1 15H27M10 15V27" stroke="#6a5fc0" strokeWidth="2" />
  </Glyph>
);

/* ---------- annotation arrows ---------- */
const arrow = (x1: number, y1: number, x2: number, y2: number, w = 9, hl = 30, hw = 15) => {
  const dx = x2 - x1, dy = y2 - y1, len = Math.hypot(dx, dy);
  const ux = dx / len, uy = dy / len, nx = -uy, ny = ux;
  const bx = x2 - ux * hl, by = y2 - uy * hl;
  const pts = [
    [x1, y1],
    [bx + nx * (w / 2), by + ny * (w / 2)],
    [bx + nx * hw - ux * 4, by + ny * hw - uy * 4],
    [x2, y2],
    [bx - nx * hw - ux * 4, by - ny * hw - uy * 4],
    [bx - nx * (w / 2), by - ny * (w / 2)],
  ];
  return pts.map(p => `${p[0].toFixed(1)},${p[1].toFixed(1)}`).join(' ');
};
const arrows = [
  [294, 681, 520, 554], [225, 455, 642, 752], [199, 455, 647, 843], [185, 455, 660, 1028],
  [153, 987, 1188, 286], [188, 1045, 1342, 212], [873, 808, 956, 1005], [2150, 1225, 2308, 1470],
];

const Gear = () => <GearWrap><Settings size={18} strokeWidth={1.6} /></GearWrap>;
const GripDots = ({ x, y }: { x: number; y: number }) => (
  <Grip $x={x} $y={y}><i /><i /><i /><i /><i /><i /></Grip>
);

const swatches = [C.B, C.D, C.T, C.C, C.O, C.P, C.K, C.R, C.Y, C.G, C.S];
const values = ['2818', '2866', '2869', '2872', '2877', '2879', '2889', '2891', '2892', '2894', '2895'];

export default function App() {
  return (
    <Page>
      <Global />
      <TopBar>
        <BackCell><BackIcon /></BackCell>
        <TopTitle>分析主题</TopTitle>
        <Dots><i /><i /><i /></Dots>
      </TopBar>
      <Toolbar>
        <ToolItem><ToolLucide><RefreshCw size={31} strokeWidth={1.7} /></ToolLucide>刷新</ToolItem>
        <ToolItem><ToolLucide><Undo2 size={31} strokeWidth={1.7} /></ToolLucide>撤销</ToolItem>
        <ToolItem $off><ToolLucide><Redo2 size={31} strokeWidth={1.7} /></ToolLucide>还原</ToolItem>
        <ToolItem><ExcelIcon />导出Excel</ToolItem>
        <ToolItem><ExplainIcon />数据解释</ToolItem>
      </Toolbar>
      <Main>
        <LeftPanel>
          <LeftUpper>
            <TitleBox>今日各地区发送消息总量<SwapIcon /></TitleBox>
            <SearchRow>
              <SearchBox><Search size={34} color="#1d2b45" strokeWidth={1.8} />搜索字段</SearchBox>
              <MoreIcon />
            </SearchRow>
            <FieldHead $top={32}>维度<PlusIcon /></FieldHead>
            <FieldList>
              <FieldRow><TIcon c="#5d8adf" /><FieldName>msg_day</FieldName></FieldRow>
              <FieldRow><HashIcon c="#5d8adf" /><FieldName>total_msg_cnt</FieldName></FieldRow>
              <FieldRow><TIcon star c="#5d8adf" /><FieldName>指标名称</FieldName></FieldRow>
            </FieldList>
          </LeftUpper>
          <GripDots x={214} y={743} />
          <FieldHead $top={23}>指标<PlusIcon /></FieldHead>
          <FieldList>
            <FieldRow><GlobeIcon size={34} color="#3fb5a3" strokeWidth={1.6} /><FieldName>sender_lat</FieldName><Suffix>(纬度)</Suffix></FieldRow>
            <FieldRow><GlobeIcon size={34} color="#3fb5a3" strokeWidth={1.6} /><FieldName>sender_lng</FieldName><Suffix>(经度)</Suffix></FieldRow>
            <FieldRow><HashIcon star c="#3fb5a3" /><FieldName>记录数</FieldName></FieldRow>
          </FieldList>
        </LeftPanel>
        <MiddlePanel>
          <SectionTitle>图表类型</SectionTitle>
          <ChartGrid>
            {chartIcons.map((ic, i) => (
              <ChartSvg key={i} $last={i >= 15} width="38" height={i >= 15 ? 29 : 37} viewBox={`0 0 38 ${i >= 15 ? 29 : 37}`}>{ic}</ChartSvg>
            ))}
          </ChartGrid>
          <HintTitle>点地图</HintTitle>
          <HintTitle>建议2个地理字段（经度、纬度）</HintTitle>
          <TabsRow>
            <TabCell $on>图形属性</TabCell>
            <TabCell>组件样式</TabCell>
          </TabsRow>
          <PropList>
            <PropRow><PropLabel>颜色</PropLabel><Gear /><PropPill>total_msg_cnt<Caret /></PropPill></PropRow>
            <PropRow><PropLabel>大小</PropLabel><Gear /><PropPill>total_msg_cnt</PropPill></PropRow>
            <PropRow><PropLabel>形状</PropLabel><Gear /><Placeholder>拖入一个字段</Placeholder></PropRow>
            <PropRow><PropLabel>标签</PropLabel><Gear /><PropPill>total_msg_cnt</PropPill></PropRow>
            <PropRow><PropLabel>提示</PropLabel><Gear /><Placeholder>拖入字段</Placeholder></PropRow>
            <PropRow><PropLabel>细粒度</PropLabel><Gear /><Placeholder>拖入字段</Placeholder></PropRow>
          </PropList>
          <FilterArea>
            <FilterTitle>结果过滤器</FilterTitle>
            <DropZone>拖入字段</DropZone>
          </FilterArea>
          <ScrollThumb $top={92} $h={134} />
          <ScrollThumb $top={582} $h={80} />
          <GripDots x={231} y={474} />
          <GripDots x={231} y={1086} />
        </MiddlePanel>
        <RightPanel>
          <AxisRow>
            <AxisName>横轴</AxisName>
            <AxisIcon><AxisXIcon /><AxisCaret /></AxisIcon>
            <AxisGap />
            <AxisPill>sender_lng(经度)<AxisAgg>平均</AxisAgg></AxisPill>
          </AxisRow>
          <AxisRow>
            <AxisName>纵轴</AxisName>
            <AxisIcon><AxisYIcon /><AxisCaret /></AxisIcon>
            <AxisGap />
            <AxisPill>sender_lat(纬度)<AxisAgg>平均</AxisAgg></AxisPill>
          </AxisRow>
          <Card>
            <CardTitle>地图组件</CardTitle>
            <CardBody>
              <MapBox>
                <ChinaMap />
                <ZoomGroup $top={22}>
                  <ZoomBtn $h={52}><Plus size={22} strokeWidth={1.5} /></ZoomBtn>
                  <ZoomBtn $h={53}><Minus size={22} strokeWidth={3} /></ZoomBtn>
                </ZoomGroup>
                <ZoomGroup $top={147}>
                  <ZoomBtn $h={54}><AutoIcon /></ZoomBtn>
                  <ZoomBtn $h={54}><Pointer size={36} strokeWidth={1.5} /></ZoomBtn>
                </ZoomGroup>
              </MapBox>
              <Legend>
                <LegendHead>total_msg_cnt</LegendHead>
                <LegendGap $h={10} />
                {swatches.map((c, i) => (
                  <LegendRow key={i}><LegendSwatch $c={c} />{values[i]}</LegendRow>
                ))}
                <LegendGap $h={25} />
                <LegendHead>total_msg_cnt</LegendHead>
                <LegendGap $h={10} />
                {values.map((v, i) => (
                  <LegendRow key={v}><LegendDotCell><LegendDot $s={3 + i * 0.35} /></LegendDotCell>{v}</LegendRow>
                ))}
              </Legend>
            </CardBody>
            <CardFoot><Info size={30} strokeWidth={1.8} /></CardFoot>
          </Card>
        </RightPanel>
      </Main>
      <BottomBar>
        <DataTab><Database size={30} strokeWidth={2} />数据</DataTab>
        <BarTab><TabBarIcon />发送消息的人数</BarTab>
        <BarTab><TabDashIcon />仪表板</BarTab>
        <BarTab><TabBarIcon />接受消息人数</BarTab>
        <BarTab><TabBarIcon />每日消息总数</BarTab>
        <BarTab><TabBarIcon />发送消息最多的top10</BarTab>
        <BarTab><TabBarIcon />发送用户操作系统占比</BarTab>
        <ActiveTab><TabBarIcon />地图组件</ActiveTab>
        <TailTab><AddIcon /><AddDashIcon /></TailTab>
      </BottomBar>

      <Menu>
        <MenuItem><MenuIcon><BlueDot /></MenuIcon><MenuText>升序(total_msg_cnt)</MenuText><ChevronRight size={34} strokeWidth={1.4} /></MenuItem>
        <MenuItem><MenuIcon /><MenuText>降序</MenuText><ChevronRight size={34} strokeWidth={1.4} /></MenuItem>
        <MenuItem $off><MenuIcon /><MenuText>自定义排序...</MenuText></MenuItem>
        <MenuLine />
        <MenuItem $active><MenuIcon><BlueDot /></MenuIcon><MenuText>相同值为一组</MenuText></MenuItem>
        <MenuItem><MenuIcon /><MenuText>区间分组设置</MenuText></MenuItem>
        <MenuLine />
        <MenuItem><MenuIcon><Filter size={30} strokeWidth={1.8} /></MenuIcon><MenuText>过滤...</MenuText></MenuItem>
        <MenuLine />
        <MenuItem><MenuIcon><RenameIcon /></MenuIcon><MenuText>设置显示名</MenuText></MenuItem>
        <MenuLine />
        <MenuItem><MenuIcon><Copy size={30} strokeWidth={1.8} /></MenuIcon><MenuText>复制</MenuText></MenuItem>
        <MenuItem><MenuIcon><Trash2 size={32} strokeWidth={1.5} /></MenuIcon><MenuText>删除</MenuText></MenuItem>
      </Menu>
      <Tip>相同值为一组</Tip>
      <Watermark>CSDN @新征程，再出发</Watermark>
      <Overlay width="2621" height="1520" viewBox="0 0 2621 1520">
        {arrows.map((a, i) => <polygon key={i} points={arrow(a[0], a[1], a[2], a[3])} fill="#fb3a3a" />)}
      </Overlay>
    </Page>
  );
}
